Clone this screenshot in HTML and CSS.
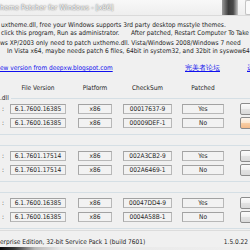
FILE: index.html
```html
<!DOCTYPE html>
<html lang="en">
<head>
    <meta charset="UTF-8">
    <title>UxTheme Patcher for Windows</title>
    <link rel="stylesheet" href="styles.css">
</head>
<body>
    <div class="titlebar">
        <div class="title">heme Patcher for Windows - [x86]</div>
        <div class="glass-btn"></div>
        <div class="edge-btn"></div>
    </div>

    <div class="intro">
        <p class="line">uxtheme.dll, free your Windows supports 3rd party desktop msstyle themes.</p>
        <p class="line split">
            <span class="half">click this program, Run as administrator.</span>
            <span>After patched, Restart Computer To Take effect.</span>
        </p>
        <p class="line gap">ws XP/2003 only need to patch uxtheme.dll. Vista/Windows 2008/Windows 7 need</p>
        <p class="line indent">In Vista x64, maybe needs patch 6 files, 64bit in system32, and 32bit in syswow64.</p>
    </div>

    <div class="links">
        <a href="#" class="link-main">ew version from deepxw.blogspot.com</a>
        <a href="#" class="link-forum">完美者论坛</a>
        <a href="#" class="link-more">远景论坛</a>
    </div>

    <div class="row head">
        <span class="label"></span>
        <span class="cell fv">File Version</span>
        <span class="cell pf">Platform</span>
        <span class="cell cs">CheckSum</span>
        <span class="cell pt">Patched</span>
    </div>

    <div class="group">
        <span class="group-label">.dll</span>
        <div class="row">
            <span class="label">:</span>
            <span class="box fv">6.1.7600.16385</span>
            <span class="box pf">x86</span>
            <span class="box cs">00017637-9</span>
            <span class="box pt">Yes</span>
            <button class="btn"></button>
        </div>
        <div class="row">
            <span class="label">:</span>
            <span class="box fv">6.1.7600.16385</span>
            <span class="box pf">x86</span>
            <span class="box cs">00009DEF-1</span>
            <span class="box pt">No</span>
            <button class="btn warm"></button>
        </div>
    </div>

    <div class="group">
        <div class="row">
            <span class="label">:</span>
            <span class="box fv">6.1.7601.17514</span>
            <span class="box pf">x86</span>
            <span class="box cs">002A3CB2-9</span>
            <span class="box pt">Yes</span>
            <button class="btn"></button>
        </div>
        <div class="row">
            <span class="label">:</span>
            <span class="box fv">6.1.7601.17514</span>
            <span class="box pf">x86</span>
            <span class="box cs">002A6469-1</span>
            <span class="box pt">No</span>
            <button class="btn"></button>
        </div>
    </div>

    <div class="group">
        <div class="row">
            <span class="label">:</span>
            <span class="box fv">6.1.7600.16385</span>
            <span class="box pf">x86</span>
            <span class="box cs">00047DD4-9</span>
            <span class="box pt">Yes</span>
            <button class="btn"></button>
        </div>
        <div class="row">
            <span class="label">:</span>
            <span class="box fv">6.1.7600.16385</span>
            <span class="box pf">x86</span>
            <span class="box cs">0004A58B-1</span>
            <span class="box pt">No</span>
            <button class="btn"></button>
        </div>
    </div>

    <div class="statusbar">
        <span>erprise Edition, 32-bit Service Pack 1 (build 7601)</span>
        <span>1.5.0.22</span>
    </div>
    <div class="taskbar"></div>
</body>
</html>
```

FILE: styles.css
```css
body, html {
    margin: 0;
    padding: 0;
}

body {
    width: 250px;
    height: 250px;
    overflow: hidden;
    background-color: #f0f0f0;
    color: #1e1e1e;
    font-family: 'DejaVu Sans Condensed', 'DejaVu Sans', sans-serif;
    font-size: 6.5px;
    line-height: 8px;
}

.titlebar {
    height: 15px;
    border-bottom: 1px solid #dadada;
    background: linear-gradient(#f8f8f8, #eeeeee);
    display: flex;
    align-items: center;
}

.title {
    flex-grow: 1;
    color: #fff;
    font-size: 7.4px;
    text-shadow: 0 0 1px #666, 0 0 2px #888;
    white-space: nowrap;
}

.glass-btn {
    width: 16px;
    height: 15px;
    background: linear-gradient(90deg, #9a9a9a, #3c3c3c 40%, #4a4a4a 70%, #c8c8c8);
}

.edge-btn {
    width: 4px;
    height: 13px;
    margin-left: 7px;
    border: 1px solid #c4c4c4;
    border-right: none;
    border-radius: 2px 0 0 2px;
    background: #fafafa;
}

/* intro text */
.intro {
    margin-top: 5px;
    white-space: nowrap;
}

.line {
    margin: 0;
    padding-left: 1px;
}

.split {
    display: flex;
}

.half {
    width: 130px;
    flex-shrink: 0;
}

.gap {
    margin-top: 2px;
    padding-left: 0;
}

.indent {
    padding-left: 7px;
}

.links {
    margin-top: 9px;
    display: flex;
    white-space: nowrap;
}

.links a {
    color: #1010ee;
}

.link-main {
    width: 185px;
    flex-shrink: 0;
}

.link-forum {
    width: 62px;
    flex-shrink: 0;
}

/* rows */
.row {
    display: flex;
    align-items: center;
    height: 12px;
    white-space: nowrap;
}

.row + .row {
    margin-top: 2px;
}

.head {
    margin-top: 12px;
    height: 8px;
}

.head .cell {
    text-align: center;
    flex-shrink: 0;
}

.label {
    width: 10px;
    padding-left: 2px;
    box-sizing: border-box;
    flex-shrink: 0;
}

.box {
    height: 10px;
    box-sizing: border-box;
    border: 1px solid #b8b8b8;
    border-top-color: #a2a2a2;
    border-left-color: #a8a8a8;
    background: #f2f2f2;
    text-align: center;
    line-height: 8px;
    flex-shrink: 0;
}

.fv { width: 56px; }
.pf { width: 34px; margin-left: 12px; }
.cs { width: 49px; margin-left: 11px; }
.pt { width: 42px; margin-left: 10px; }

.btn {
    width: 30px;
    height: 12px;
    margin-left: 16px;
    padding: 0;
    flex-shrink: 0;
    border: 1px solid #8c8c8c;
    border-radius: 2px;
    background: linear-gradient(#fbfbfb, #f0f0f0 50%, #e3e3e3 50%, #dadada);
}

.btn.warm {
    background: linear-gradient(#fdf6ee, #fbe6cf 50%, #f8cfa6 50%, #f4bb8a);
}

/* group boxes */
.group {
    position: relative;
    margin-top: 6px;
    padding: 4px 0 5px;
    border-top: 1px solid #d5dfe5;
    border-bottom: 1px solid #d5dfe5;
}

.group + .group {
    margin-top: 10px;
}

.group:last-of-type {
    margin-top: 9px;
}

.group-label {
    position: absolute;
    top: -5px;
    left: 0;
    padding-right: 2px;
    background: #f0f0f0;
}

.statusbar {
    margin-top: 1px;
    height: 17px;
    box-sizing: border-box;
    padding: 7px 2px 0 0;
    border-top: 1px solid #dcdcdc;
    display: flex;
    justify-content: space-between;
    white-space: nowrap;
}

.taskbar {
    height: 4px;
    background: linear-gradient(90deg, #0a0a0a, #3a3a3a 6%, #b8b8b8 14%, #e6e6e6 24%, #efefef);
}
```
